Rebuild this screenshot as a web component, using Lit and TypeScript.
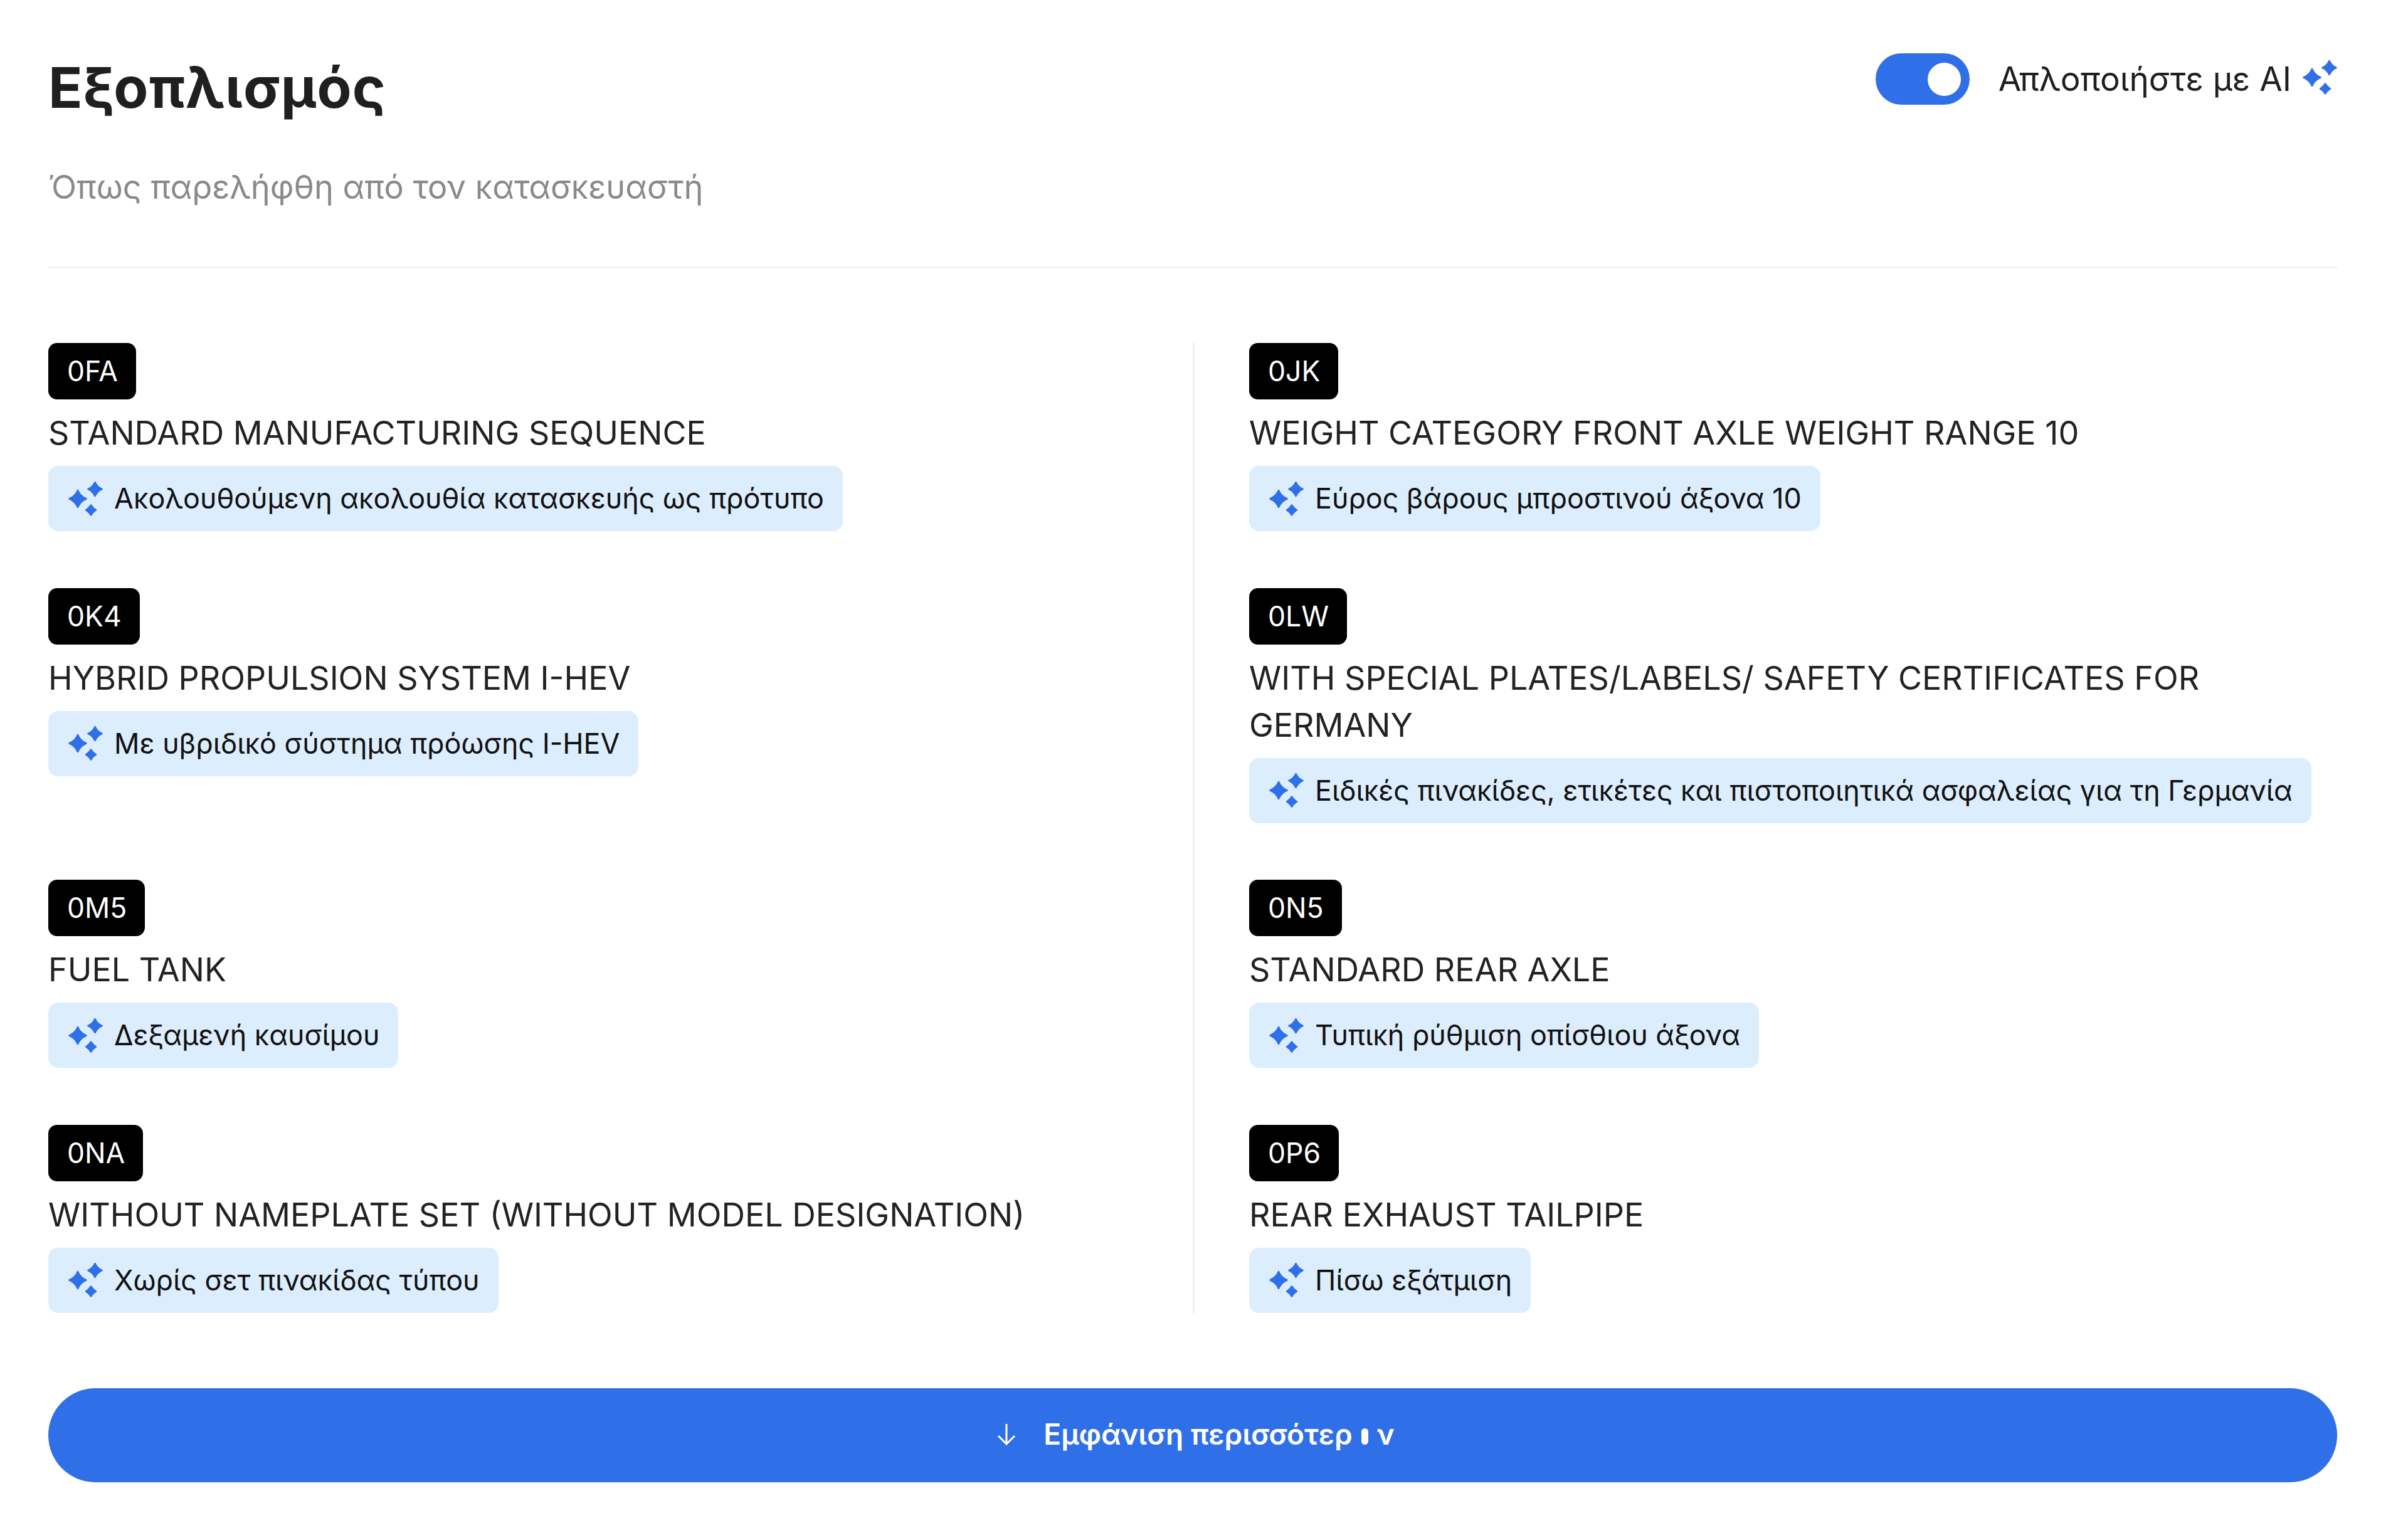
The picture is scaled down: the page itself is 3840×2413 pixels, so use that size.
import { LitElement, html, css, svg } from "lit";
import { customElement } from "lit/decorators.js";

const items = [
  ["0FA", "STANDARD MANUFACTURING SEQUENCE", "Ακολουθούμενη ακολουθία κατασκευής ως πρότυπο"],
  ["0JK", "WEIGHT CATEGORY FRONT AXLE WEIGHT RANGE 10", "Εύρος βάρους μπροστινού άξονα 10"],
  ["0K4", "HYBRID PROPULSION SYSTEM I-HEV", "Με υβριδικό σύστημα πρόωσης I-HEV"],
  ["0LW", "WITH SPECIAL PLATES/LABELS/ SAFETY CERTIFICATES FOR GERMANY", "Ειδικές πινακίδες, ετικέτες και πιστοποιητικά ασφαλείας για τη Γερμανία"],
  ["0M5", "FUEL TANK", "Δεξαμενή καυσίμου"],
  ["0N5", "STANDARD REAR AXLE", "Τυπική ρύθμιση οπίσθιου άξονα"],
  ["0NA", "WITHOUT NAMEPLATE SET (WITHOUT MODEL DESIGNATION)", "Χωρίς σετ πινακίδας τύπου"],
  ["0P6", "REAR EXHAUST TAILPIPE", "Πίσω εξάτμιση"],
];

const star = (cx: number, cy: number, r: number, k: number) =>
  `M${cx} ${cy - r}Q${cx + k} ${cy - k} ${cx + r} ${cy}Q${cx + k} ${cy + k} ${cx} ${cy + r}Q${cx - k} ${cy + k} ${cx - r} ${cy}Q${cx - k} ${cy - k} ${cx} ${cy - r}Z`;

const sparkle = svg`<path d="${star(15, 27.5, 13.5, 4)}"/><path d="${star(42.500, 12, 11, 3.4)}"/><path d="${star(36, 45.500, 8, 3)}"/>`;

@customElement("app-root")
export class AppRoot extends LitElement {
  static styles = css`
    :host {
      display: block;
      background: #fff;
      font-family: Inter, "Noto Sans", sans-serif;
      color: #1f1f1f;
      min-height: 2413px;
    }
    .page {
      padding: 70px 113px 0 77px;
      box-sizing: border-box;
      width: 3840px;
    }
    .head {
      display: flex;
      justify-content: space-between;
      align-items: flex-start;
      padding-bottom: 90px;
      border-bottom: 3px solid #f1f2f4;
    }
    h1 {
      margin: 0;
      font-size: 90px;
      line-height: 140px;
      font-weight: 700;
      letter-spacing: 1.200px;
    }
    .sub {
      margin: 51px 0 0;
      font-size: 52.300px;
      line-height: 74px;
      color: #8a8a8a;
    }
    .ai {
      display: flex;
      align-items: center;
      margin: 14px 0 0 0;
      font-size: 53px;
      line-height: 84px;
    }
    .toggle {
      width: 150px;
      height: 82px;
      border-radius: 41px;
      background: #2f6fe8;
      display: flex;
      align-items: center;
      justify-content: flex-end;
      padding-right: 14px;
      box-sizing: border-box;
      margin-right: 46px;
    }
    .toggle i {
      width: 53px;
      height: 53px;
      border-radius: 50%;
      background: #fff;
    }
    .spark {
      width: 55px;
      height: 55px;
      fill: #2f6fe8;
      stroke: #2f6fe8;
      stroke-width: 2.500;
      stroke-linejoin: round;
      flex: none;
    }
    .ai .spark { margin: 0 0 5px 18px; }
    .grid {
      display: grid;
      grid-template-columns: 1fr 1fr;
      margin-top: 119px;
    }
    .cell {
      padding: 0 89px 90.500px 0;
      display: flex;
      flex-direction: column;
      align-items: flex-start;
      min-width: 0;
    }
    .cell.right {
      padding: 0 0 90.500px 87px;
      border-left: 3px solid #eceef0;
    }
    .cell.last { padding-bottom: 0; }
    .code {
      background: #000;
      color: #fff;
      height: 90px;
      line-height: 90px;
      padding: 0 29px 0 30px;
      border-radius: 14px;
      font-size: 44.500px;
    }
    .label {
      margin-top: 16px;
      font-size: 52px;
      line-height: 75px;
      color: #222;
    }
    .chip {
      margin-top: 15px;
      height: 104px;
      display: flex;
      align-items: center;
      padding: 0 30px 0 32px;
      background: #dcedfd;
      border-radius: 16px;
      font-size: 44.800px;
      color: #111;
      white-space: nowrap;
    }
    .chip .spark { margin-right: 18px; }
    .more {
      margin-top: 120px;
      height: 150px;
      box-sizing: border-box;
      border-radius: 75px;
      background: #2f6fe8;
      color: #fff;
      display: flex;
      align-items: center;
      justify-content: center;
      padding: 0 0 3px 10px;
      font-size: 46px;
      font-weight: 600;
    }
    .more svg { width: 30px; height: 36px; margin-right: 44px; stroke: #fff; fill: none; stroke-width: 3; }
    .glyph {
      display: inline-block;
      width: 11px;
      height: 26px;
      border-radius: 6px;
      background: #fff;
      margin: 0 14px;
    }
  `;

  render() {
    return html`<div class="page">
      <div class="head">
        <div>
          <h1>Εξοπλισμός</h1>
          <p class="sub">Όπως παρελήφθη από τον κατασκευαστή</p>
        </div>
        <div class="ai">
          <div class="toggle"><i></i></div>
          <span>Απλοποιήστε με AI</span>
          <svg class="spark" viewBox="0 0 55 55">${sparkle}</svg>
        </div>
      </div>
      <div class="grid">
        ${items.map(([c, l, t], i) => html`<div class="cell ${i % 2 ? "right" : ""} ${i >= 6 ? "last" : ""}">
          <span class="code">${c}</span>
          <div class="label">${l}</div>
          <div class="chip"><svg class="spark" viewBox="0 0 55 55">${sparkle}</svg>${t}</div>
        </div>`)}
      </div>
      <div class="more">
        <svg viewBox="0 0 30 36"><path d="M15 2v32M2 21l13 13 13-13"/></svg>
        <span>Εμφάνιση περισσότερ<span class="glyph"></span>ν</span>
      </div>
    </div>`;
  }
}
